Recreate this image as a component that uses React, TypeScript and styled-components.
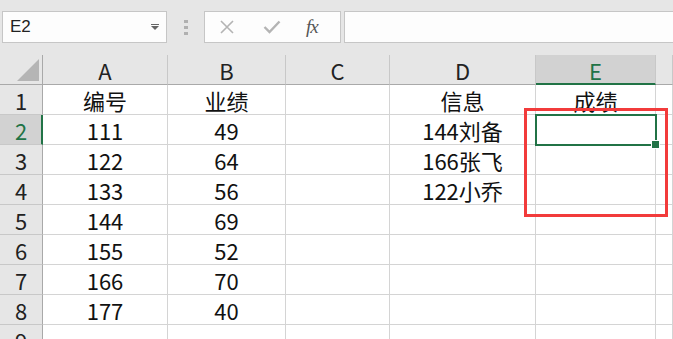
import { Fragment } from "react";
import styled, { createGlobalStyle } from "styled-components";

const GlobalStyle = createGlobalStyle`
  html, body {
    margin: 0;
    padding: 0;
    width: 673px;
    height: 339px;
    overflow: hidden;
    background: #ffffff;
    font-family: "Noto Sans CJK SC", "Noto Sans", sans-serif;
  }
  * {
    box-sizing: border-box;
  }
`;

const Window = styled.div`
  width: 673px;
  height: 339px;
  display: flex;
  flex-direction: column;
  overflow: hidden;
`;

const Toolbar = styled.div`
  height: 55px;
  flex-shrink: 0;
  background: #e6e6e6;
  display: flex;
  align-items: flex-start;
  padding: 11px 0 0 2px;
`;

const NameBox = styled.div`
  width: 165px;
  height: 32px;
  background: #fdfdfd;
  border: 1px solid #c6c6c6;
  display: flex;
  align-items: center;
  justify-content: space-between;
  padding: 0 7px 0 7px;
  font-family: "Liberation Sans", "Noto Sans", sans-serif;
  font-size: 17px;
  color: #222;
`;

const Arrow = styled.span`
  display: flex;
  flex-direction: column;
  align-items: center;
  gap: 1px;
  &::before {
    content: "";
    width: 8px;
    height: 1px;
    background: #666;
  }
  &::after {
    content: "";
    width: 0;
    height: 0;
    border-left: 4px solid transparent;
    border-right: 4px solid transparent;
    border-top: 4px solid #666;
  }
`;

const Grip = styled.div`
  width: 37px;
  height: 32px;
  display: flex;
  flex-direction: column;
  align-items: center;
  justify-content: center;
  gap: 3px;
  span {
    width: 4px;
    height: 3px;
    background: #b0b0b0;
  }
`;

const FormulaButtons = styled.div`
  width: 137px;
  height: 32px;
  background: #fdfdfd;
  border: 1px solid #c6c6c6;
  display: flex;
  align-items: center;
  padding-left: 14px;
  gap: 28px;
`;

const Fx = styled.span`
  font-family: "Liberation Serif", serif;
  font-style: italic;
  font-size: 19px;
  color: #555;
  letter-spacing: -1px;
  margin-left: -3px;
`;

const FormulaInput = styled.div`
  flex: 1;
  height: 32px;
  margin-left: 3px;
  background: #fdfdfd;
  border: 1px solid #c6c6c6;
  border-right: none;
`;

const Sheet = styled.div`
  position: relative;
  flex: 1;
  display: grid;
  grid-template-columns: 43px 125px 118px 104px 146px 120px 1fr;
  grid-auto-rows: 30px;
  font-size: 22px;
  color: #111;
  overflow: hidden;
`;

const Corner = styled.div`
  background: #e6e6e6;
  border-right: 1px solid #a9a9a9;
  border-bottom: 1px solid #a9a9a9;
  position: relative;
  &::after {
    content: "";
    position: absolute;
    left: 17px;
    top: 4px;
    width: 0;
    height: 0;
    border-left: 22px solid transparent;
    border-bottom: 22px solid #b5b5b5;
  }
`;

const ColHead = styled.div<{ $active?: boolean }>`
  background: ${(p) => (p.$active ? "#d2d2d2" : "#e6e6e6")};
  border-right: 1px solid #c8c8c8;
  border-bottom: ${(p) => (p.$active ? "2px solid #217346" : "1px solid #a9a9a9")};
  color: ${(p) => (p.$active ? "#217346" : "#222")};
  display: flex;
  align-items: center;
  justify-content: center;
  padding-top: ${(p) => (p.$active ? "1px" : "0")};
`;

const RowHead = styled.div<{ $active?: boolean }>`
  background: ${(p) => (p.$active ? "#d2d2d2" : "#e6e6e6")};
  border-right: ${(p) => (p.$active ? "2px solid #217346" : "1px solid #a9a9a9")};
  border-bottom: 1px solid #c8c8c8;
  color: ${(p) => (p.$active ? "#217346" : "#222")};
  display: flex;
  align-items: center;
  justify-content: center;
  padding-left: ${(p) => (p.$active ? "1px" : "0")};
`;

const Cell = styled.div`
  border-right: 1px solid #d4d4d4;
  border-bottom: 1px solid #d4d4d4;
  display: flex;
  align-items: center;
  justify-content: center;
  white-space: nowrap;
  line-height: 1;
  padding-top: 1px;
`;

const Selection = styled.div`
  position: absolute;
  left: 535px;
  top: 59px;
  width: 122px;
  height: 32px;
  border: 2px solid #217346;
  pointer-events: none;
  &::after {
    content: "";
    position: absolute;
    right: -5px;
    bottom: -5px;
    width: 7px;
    height: 7px;
    background: #217346;
    border: 1px solid #ffffff;
  }
`;

const Highlight = styled.div`
  position: absolute;
  left: 524px;
  top: 53px;
  width: 144px;
  height: 109px;
  border: 3px solid #f23b3b;
  pointer-events: none;
`;

const columns = ["A", "B", "C", "D", "E", ""];

const rows: string[][] = [
  ["编号", "业绩", "", "信息", "成绩", ""],
  ["111", "49", "", "144刘备", "", ""],
  ["122", "64", "", "166张飞", "", ""],
  ["133", "56", "", "122小乔", "", ""],
  ["144", "69", "", "", "", ""],
  ["155", "52", "", "", "", ""],
  ["166", "70", "", "", "", ""],
  ["177", "40", "", "", "", ""],
  ["", "", "", "", "", ""],
];

function CloseIcon() {
  return (
    <svg width="16" height="16" viewBox="0 0 16 16">
      <path d="M2 2 L14 14 M14 2 L2 14" stroke="#b4b4b4" strokeWidth="1.6" fill="none" />
    </svg>
  );
}

function CheckIcon() {
  return (
    <svg width="18" height="14" viewBox="0 0 18 14">
      <path d="M1.5 7 L6.5 12 L16.5 1.5" stroke="#b4b4b4" strokeWidth="2.4" fill="none" />
    </svg>
  );
}

export default function App() {
  return (
    <Window>
      <GlobalStyle />
      <Toolbar>
        <NameBox>
          E2
          <Arrow />
        </NameBox>
        <Grip>
          <span />
          <span />
          <span />
        </Grip>
        <FormulaButtons>
          <CloseIcon />
          <CheckIcon />
          <Fx>fx</Fx>
        </FormulaButtons>
        <FormulaInput />
      </Toolbar>
      <Sheet>
        <Corner />
        {columns.map((c, j) => (
          <ColHead key={"c" + j} $active={c === "E"}>
            {c}
          </ColHead>
        ))}
        {rows.map((row, i) => (
          <Fragment key={"r" + i}>
            <RowHead $active={i === 1}>{i + 1}</RowHead>
            {row.map((v, j) => (
              <Cell key={j}>{v}</Cell>
            ))}
          </Fragment>
        ))}
        <Selection />
        <Highlight />
      </Sheet>
    </Window>
  );
}
